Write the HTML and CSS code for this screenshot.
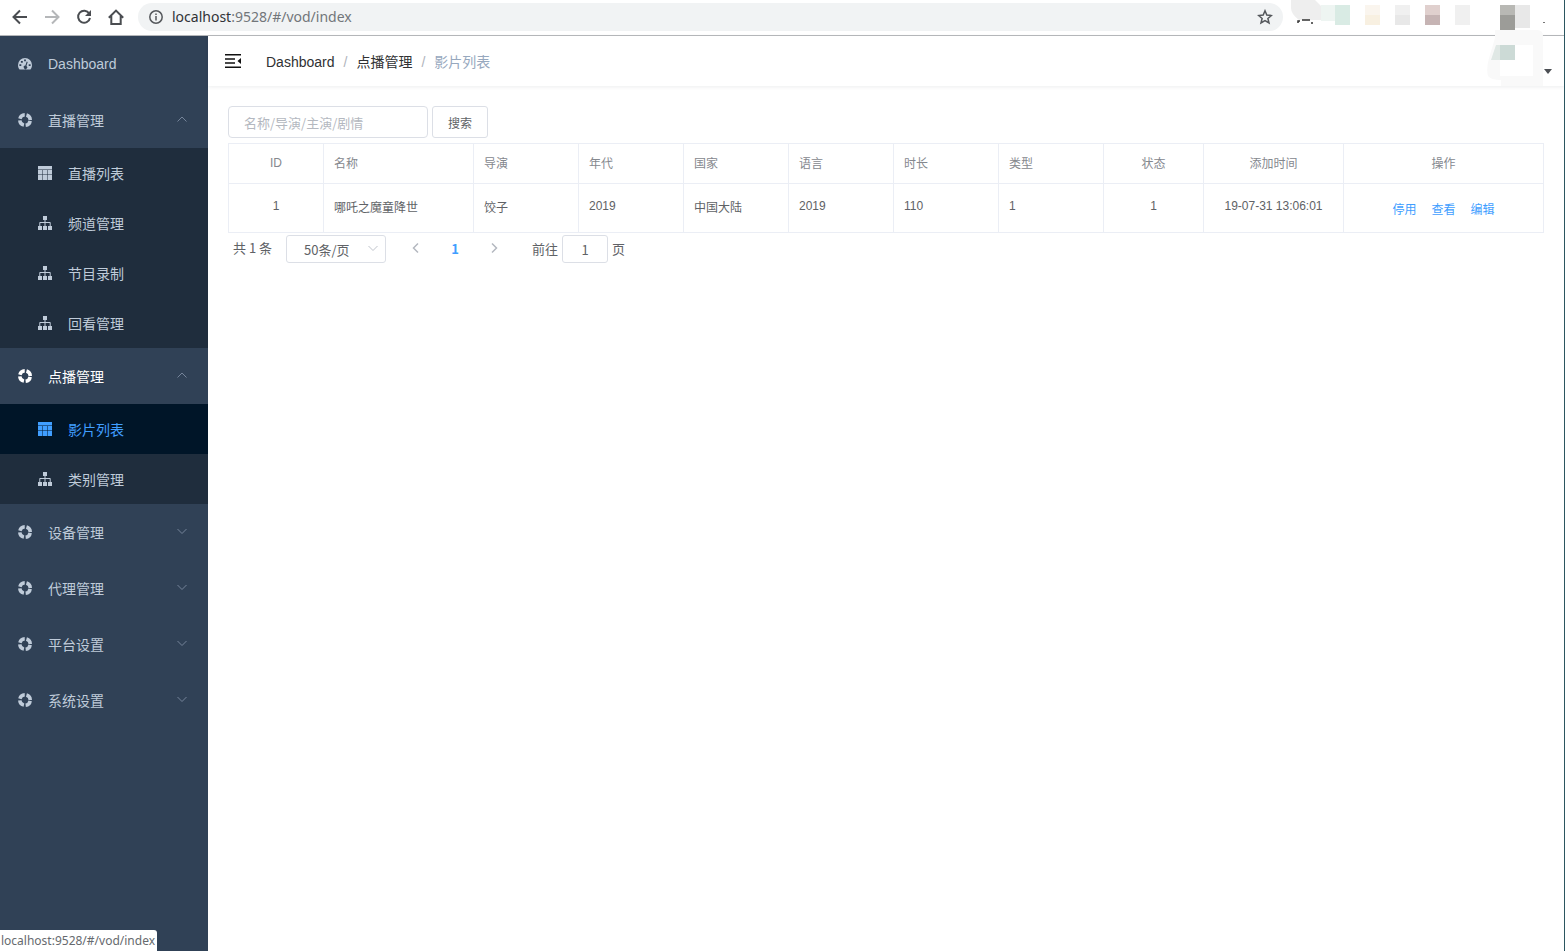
FILE: index.html
```html
<!DOCTYPE html>
<html lang="zh-CN">
<head>
<meta charset="utf-8">
<title>影片列表</title>
<link rel="stylesheet" href="styles.css">
</head>
<body>
<svg class="defs" aria-hidden="true">
  <symbol id="ring" viewBox="0 0 14 14"><circle cx="7" cy="7" r="5.250" fill="none" stroke="currentColor" stroke-width="3.500" stroke-dasharray="6.447 1.800" stroke-dashoffset="-0.900" /></symbol>
  <symbol id="gauge" viewBox="0 0 14 14"><path fill="currentColor" fill-rule="evenodd" d="M7 1a7 7 0 0 0-7 7c0 1.600.500 3 1.200 4q.3.500.8.500h10q.5 0 .8-.5C13.500 11 14 9.600 14 8a7 7 0 0 0-7-7ZM6.100 2.500h1.800v1.800H6.100zM2.900 3.900h1.900v1.900H2.900zM1.400 7.200h1.900v1.900H1.400zM10.700 7.200h1.900v1.900h-1.900zM8.700 4.600l1 .3-1.300 4a1.700 1.700 0 1 1-1-.3z"/></symbol>
  <symbol id="grid" viewBox="0 0 14 14"><path fill="currentColor" d="M0 0h14v3.500H0zM0 4h4.300v4.600H0zM4.800 4h4.400v4.600H4.800zM9.700 4H14v4.600H9.700zM0 9.100h4.300V14H0zM4.800 9.100h4.400V14H4.800zM9.700 9.100H14V14H9.700z"/></symbol>
  <symbol id="tree" viewBox="0 0 14 14"><path fill="currentColor" d="M5 0h4v4H7.500v2H12q.7 0 .7.700V10H14v4h-4v-4h1.700V7H7.500v3H9v4H5v-4h1.500V7H2.300v3H4v4H0v-4h1.300V6.700q0-.7.700-.7h4.500V4H5z"/></symbol>
  <symbol id="up" viewBox="0 0 12 12"><path fill="none" stroke="currentColor" d="M1.500 7.500 6 3l4.500 4.500"/></symbol>
  <symbol id="down" viewBox="0 0 12 12"><path fill="none" stroke="currentColor" d="M1.500 3 6 7.500 10.500 3"/></symbol>
</svg>

<header class="browser">
  <button class="nav-btn" aria-label="后退"><svg viewBox="0 0 16 16"><path d="M15 8H2M8 1.500 1.500 8 8 14.500"/></svg></button>
  <button class="nav-btn off" aria-label="前进"><svg viewBox="0 0 16 16"><path d="M1 8h13M8 1.500 14.500 8 8 14.500"/></svg></button>
  <button class="nav-btn" aria-label="刷新"><svg viewBox="0 0 16 16"><path d="M13.200 4.500A6 6 0 1 0 14 9"/><path class="solid" d="M15 1v6H9z"/></svg></button>
  <button class="nav-btn" aria-label="主页"><svg viewBox="0 0 16 16"><path d="M.8 8.800 8 1.600l7.200 7.200M3.300 7v8h9.400V7"/></svg></button>
  <div class="address">
    <svg class="info" viewBox="0 0 14 14"><circle cx="7" cy="7" r="6.200"/><path d="M7 6v4.500M7 3.500V5"/></svg>
    <span class="url"><b>localhost</b>:9528/#/vod/index</span>
    <svg class="star" viewBox="0 0 16 16"><path d="m8 1.800 1.800 4.300 4.600.4-3.500 3 1.100 4.500L8 11.600 4 14l1.100-4.500-3.500-3 4.600-.4z"/></svg>
  </div>
  <svg class="extensions" viewBox="0 0 282 90" aria-hidden="true">
    <path fill="#eeeeee" d="M8 0h24l8 8v12H16Q8 14 8 8z"/>
    <path fill="#eef5f2" d="M38 5h14v16H38z"/>
    <path fill="none" stroke="#333" stroke-width="1.500" d="M15 23v-2h2M19 20h8M29 22v2"/>
    <path fill="#d9ebe4" d="M52 5h15v20H52z"/>
    <path fill="#faf5ee" d="M82 5h15v10H82z"/><path fill="#f8f0e1" d="M82 15h15v10H82z"/>
    <path fill="#f0f0f0" d="M112 5h15v10h-15zM172 5h15v20h-15z"/><path fill="#e8e8e8" d="M112 15h15v10h-15z"/>
    <path fill="#e0d0ce" d="M142 5h15v10h-15z"/><path fill="#c6b4b4" d="M142 15h15v10h-15z"/>
    <path fill="#f9f9f9" d="M212 30h42q6 0 6 6v50h-42v-6q-10 0-13-4-2-7 1-18l6-20z"/>
    <path fill="#b8b8b4" d="M217 5h15v10h-15z"/><path fill="#9c9c98" d="M217 15h15v15h-15z"/>
    <path fill="#e8e8e8" d="M232 5h15v23h-15z"/>
    <path fill="#e0e8e5" d="M213 45h4v15h-9z"/><path fill="#ccdad6" d="M217 45h15v15h-15z"/>
    <path fill="#fff" d="M217 60h33v16h-33zM232 45h18v15h-18z"/>
    <path fill="#777" d="M260 22h2v1h-2z"/>
  </svg>
</header>

<div class="app">
  <nav class="sidebar">
    <a class="item" href="#"><svg><use href="#gauge"/></svg>Dashboard</a>
    <a class="item" href="#"><svg><use href="#ring"/></svg>直播管理<svg class="arrow"><use href="#up"/></svg></a>
    <div class="sub">
      <a class="item" href="#"><svg><use href="#grid"/></svg>直播列表</a>
      <a class="item" href="#"><svg><use href="#tree"/></svg>频道管理</a>
      <a class="item" href="#"><svg><use href="#tree"/></svg>节目录制</a>
      <a class="item" href="#"><svg><use href="#tree"/></svg>回看管理</a>
    </div>
    <a class="item open" href="#"><svg><use href="#ring"/></svg>点播管理<svg class="arrow"><use href="#up"/></svg></a>
    <div class="sub">
      <a class="item active" href="#"><svg><use href="#grid"/></svg>影片列表</a>
      <a class="item" href="#"><svg><use href="#tree"/></svg>类别管理</a>
    </div>
    <a class="item" href="#"><svg><use href="#ring"/></svg>设备管理<svg class="arrow"><use href="#down"/></svg></a>
    <a class="item" href="#"><svg><use href="#ring"/></svg>代理管理<svg class="arrow"><use href="#down"/></svg></a>
    <a class="item" href="#"><svg><use href="#ring"/></svg>平台设置<svg class="arrow"><use href="#down"/></svg></a>
    <a class="item" href="#"><svg><use href="#ring"/></svg>系统设置<svg class="arrow"><use href="#down"/></svg></a>
  </nav>

  <div class="main">
    <div class="topbar">
      <button class="fold" aria-label="收起菜单"><svg viewBox="0 0 16 14"><path d="M0 0h16v1.600H0zM0 4.200h10v1.600H0zM0 8.200h10v1.600H0zM0 12.400h16V14H0zM16 4v6l-3.500-3z"/></svg></button>
      <div class="crumbs"><a href="#">Dashboard</a><i>/</i><a href="#">点播管理</a><i>/</i><span>影片列表</span></div>
      <button class="caret" aria-label="用户菜单"></button>
    </div>
    <main class="content">
      <form class="filter">
        <input type="text" aria-label="搜索影片" placeholder="名称/导演/主演/剧情">
        <button type="button">搜索</button>
      </form>
      <table class="films">
        <colgroup><col class="w95"><col class="w150"><col><col><col><col><col><col><col class="w100"><col class="w140"><col class="w200"></colgroup>
        <thead><tr><th class="mid">ID</th><th>名称</th><th>导演</th><th>年代</th><th>国家</th><th>语言</th><th>时长</th><th>类型</th><th class="mid">状态</th><th class="mid">添加时间</th><th class="mid">操作</th></tr></thead>
        <tbody><tr><td class="mid">1</td><td>哪吒之魔童降世</td><td>饺子</td><td>2019</td><td>中国大陆</td><td>2019</td><td>110</td><td>1</td><td class="mid">1</td><td class="mid">19-07-31 13:06:01</td><td class="acts"><div class="ops"><button>停用</button><button>查看</button><button>编辑</button></div></td></tr></tbody>
      </table>
      <div class="pager">
        <span class="total">共 1 条</span>
        <div class="size"><select aria-label="每页条数"><option>50条/页</option></select><svg><use href="#down"/></svg></div>
        <div class="pages">
          <button aria-label="上一页"><svg viewBox="0 0 12 12"><path d="M8 1.500 3.500 6 8 10.500"/></svg></button>
          <button class="current">1</button>
          <button aria-label="下一页"><svg viewBox="0 0 12 12"><path d="M4 1.500 8.500 6 4 10.500"/></svg></button>
        </div>
        <label class="jump">前往<input type="text" value="1">页</label>
      </div>
    </main>
  </div>
</div>
<div class="status">localhost:9528/#/vod/index</div>
</body>
</html>
```
FILE: styles.css
```css
* { box-sizing: border-box; }
body {
  margin: 0;
  min-height: 100vh;
  display: flex;
  flex-direction: column;
  font: 14px "Liberation Sans", "Noto Sans CJK SC", sans-serif;
  color: #606266;
  background: #fff;
  border-right: 1px solid #2b5660;
}
button { border: 0; padding: 0; background: none; font: inherit; color: inherit; }
a { color: inherit; text-decoration: none; }
input, select { font: inherit; color: inherit; }
.defs { display: none; }

.browser {
  position: relative;
  height: 36px;
  display: flex;
  align-items: center;
  padding: 0 281px 2px 12px;
  border-bottom: 1px solid #b4b6b9;
}
.nav-btn { width: 16px; height: 16px; margin-right: 16px; }
.nav-btn svg { display: block; width: 16px; height: 16px; fill: none; stroke: #4a4d51; stroke-width: 2; }
.nav-btn.off svg { stroke: #b5b7b9; }
.nav-btn .solid { fill: #4a4d51; stroke: none; }
.address {
  flex: 1;
  display: flex;
  align-items: center;
  height: 28px;
  margin-left: -2px;
  padding: 0 10px 0 11px;
  border-radius: 14px;
  background: #f1f3f4;
}
.address svg { fill: none; stroke: #55585c; stroke-width: 1.500; }
.info { width: 14px; height: 14px; }
.star { width: 16px; height: 16px; }
.url { flex: 1; margin-left: 9px; font: 14px "Noto Sans", sans-serif; color: #72767a; }
.url b { font-weight: 400; color: #303236; }
.extensions { position: absolute; top: 0; right: -1px; width: 282px; height: 90px; z-index: 2; }

.app { flex: 1; display: flex; }
.sidebar { width: 208px; flex: none; background: #304156; color: #bfcbd9; }
.item { display: flex; align-items: center; height: 56px; padding: 0 20px 0 18px; }
.item svg { width: 14px; height: 14px; margin-right: 16px; }
.item .arrow { width: 12px; height: 12px; margin: 0 0 0 auto; color: #75849a; }
.open { color: #fff; }
.sub { background: #1f2d3d; }
.sub .item { height: 50px; padding-left: 38px; }
.sub .active { background: #001528; color: #409eff; }

.main { flex: 1; min-width: 0; }
.topbar {
  display: flex;
  align-items: center;
  height: 50px;
  padding: 0 12px 0 17px;
  box-shadow: 0 1px 4px rgba(0, 21, 41, 0.08);
}
.fold svg { display: block; width: 16px; height: 14px; fill: #111; }
.crumbs { flex: 1; display: flex; align-items: baseline; margin-left: 25px; color: #303133; }
.crumbs i { margin: 0 9px; font-style: normal; color: #b0b4bc; }
.crumbs span { color: #97a8be; }
.caret { align-self: flex-end; margin-bottom: 12px; border: 4px solid transparent; border-top: 5px solid #4c4f54; border-bottom: 0; }

.content { padding: 20px; font-size: 12px; }
.filter { display: flex; gap: 4px; margin-bottom: 5px; }
.filter input { width: 200px; height: 32px; padding: 0 15px; border: 1px solid #dcdfe6; border-radius: 4px; font: 13px "Noto Sans CJK SC", sans-serif; }
.filter input::placeholder { color: #b4b8c0; }
.filter button { width: 56px; height: 32px; border: 1px solid #dcdfe6; border-radius: 3px; }

.films { width: 100%; table-layout: fixed; border-collapse: collapse; }
.films th, .films td { border: 1px solid #ebeef5; padding: 0 10px 2px; text-align: left; }
.films th { height: 40px; font-weight: 400; color: #85888e; }
.films td { height: 49px; padding-bottom: 4px; }
.films .acts { padding-bottom: 0; }
.films .mid { text-align: center; }
.w95 { width: 95px; }
.w150 { width: 150px; }
.w100 { width: 100px; }
.w140 { width: 140px; }
.w200 { width: 200px; }
.ops { display: flex; justify-content: center; gap: 15px; color: #409eff; }

.pager { display: flex; align-items: center; padding: 2px 5px; font: 13px "Noto Sans CJK SC", sans-serif; }
.total, .jump { line-height: 24px; padding-bottom: 2px; }
.size { position: relative; margin-left: 14px; }
.size select { appearance: none; display: block; width: 100px; height: 28px; padding: 0 17px; border: 1px solid #dcdfe6; border-radius: 3px; background: #fff; }
.size svg { position: absolute; top: 8px; right: 7px; width: 12px; height: 12px; color: #c0c4cc; }
.pages { display: flex; gap: 9px; margin: 0 23px 0 15px; }
.pages button { width: 30px; height: 28px; display: grid; place-items: center; padding-bottom: 2px; }
.pages svg { width: 12px; height: 12px; fill: none; stroke: #b4b8c0; stroke-width: 1.500; }
.pages .current { color: #409eff; font-weight: 700; }
.jump { display: flex; align-items: center; gap: 4px; padding-bottom: 0; }
.jump input { width: 46px; height: 28px; border: 1px solid #dcdfe6; border-radius: 3px; text-align: center; }

.status {
  position: fixed;
  left: 0;
  bottom: 0;
  padding: 2px 2px 2px 1px;
  border-radius: 0 3px 0 0;
  background: #fff;
  font: 12px "Noto Sans", sans-serif;
  color: #666a6e;
}
```
